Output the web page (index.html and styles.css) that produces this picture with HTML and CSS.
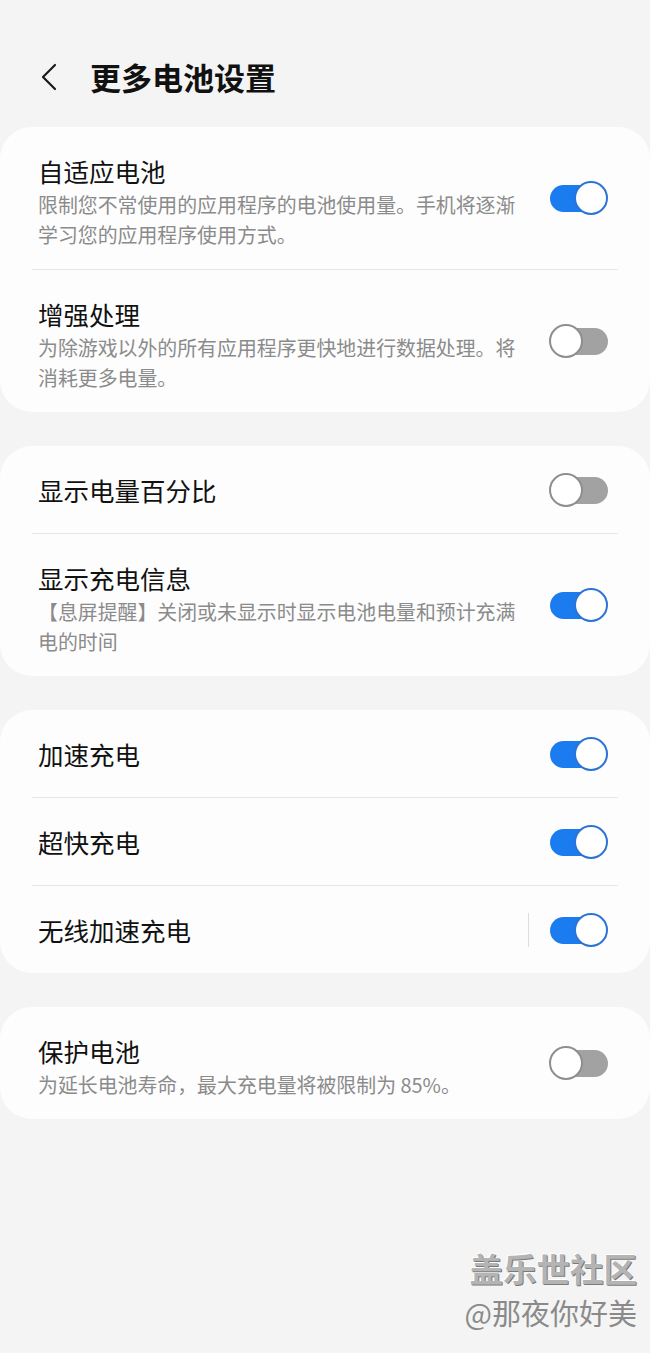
FILE: index.html
```html
<!DOCTYPE html>
<html>
  <head>
    <meta charset="utf-8">
    <title>更多电池设置</title>
    <link rel="stylesheet" href="styles.css">
  </head>
  <body>
    <div class="header">
      <svg class="back" width="16" height="28" viewBox="0 0 16 28">
        <path d="M14 2 L2 14 L14 26" fill="none" stroke="#1a1a1a" stroke-width="2.2" stroke-linecap="round" stroke-linejoin="round"/>
      </svg>
      <h1>更多电池设置</h1>
    </div>

    <div class="card">
      <div class="row multi">
        <div class="text">
          <div class="title">自适应电池</div>
          <div class="desc">限制您不常使用的应用程序的电池使用量。手机将逐渐学习您的应用程序使用方式。</div>
        </div>
        <span class="toggle on"></span>
      </div>
      <div class="divider"></div>
      <div class="row multi">
        <div class="text">
          <div class="title">增强处理</div>
          <div class="desc">为除游戏以外的所有应用程序更快地进行数据处理。将消耗更多电量。</div>
        </div>
        <span class="toggle"></span>
      </div>
    </div>

    <div class="card">
      <div class="row">
        <div class="text">
          <div class="title">显示电量百分比</div>
        </div>
        <span class="toggle"></span>
      </div>
      <div class="divider"></div>
      <div class="row multi">
        <div class="text">
          <div class="title">显示充电信息</div>
          <div class="desc">【息屏提醒】关闭或未显示时显示电池电量和预计充满电的时间</div>
        </div>
        <span class="toggle on"></span>
      </div>
    </div>

    <div class="card">
      <div class="row">
        <div class="text">
          <div class="title">加速充电</div>
        </div>
        <span class="toggle on"></span>
      </div>
      <div class="divider"></div>
      <div class="row">
        <div class="text">
          <div class="title">超快充电</div>
        </div>
        <span class="toggle on"></span>
      </div>
      <div class="divider"></div>
      <div class="row">
        <div class="text">
          <div class="title">无线加速充电</div>
        </div>
        <span class="vline"></span>
        <span class="toggle on"></span>
      </div>
    </div>

    <div class="card">
      <div class="row multi">
        <div class="text">
          <div class="title">保护电池</div>
          <div class="desc">为延长电池寿命，最大充电量将被限制为 85%。</div>
        </div>
        <span class="toggle"></span>
      </div>
    </div>

    <div class="watermark">
      <div class="wm-title">盖乐世社区</div>
      <div class="wm-user">@那夜你好美</div>
    </div>
  </body>
</html>
```

FILE: styles.css
```css
body {
  margin: 0;
  padding: 0;
  background: #f4f4f4;
  font-family: "Noto Sans CJK SC", "Noto Sans", sans-serif;
  color: #111;
}

.header {
  display: flex;
  align-items: center;
  height: 34px;
  padding: 60px 0 0 41px;
  margin-bottom: 33px;
}
.back {
  display: block;
}
.header h1 {
  margin: 0 0 0 33px;
  font-size: 31px;
  font-weight: bold;
  line-height: 34px;
  color: #111;
}

.card {
  background: #fdfdfd;
  border-radius: 32px;
  margin-bottom: 34px;
}

.row {
  display: flex;
  align-items: center;
  min-height: 87px;
  padding: 0 42px 0 38px;
  box-sizing: border-box;
}
.text {
  flex: 1;
  min-width: 0;
}
.row.multi .text {
  padding: 28px 0 19px;
}
.title {
  font-size: 25.5px;
  line-height: 32px;
}
.desc {
  width: 490px;
  margin-top: 3px;
  font-size: 19.9px;
  line-height: 30px;
  color: #8b8b8b;
}

.divider {
  height: 1px;
  margin: 0 32px;
  background: #e6e6e6;
}

.vline {
  width: 1px;
  height: 34px;
  margin-right: 20px;
  background: #dedede;
}

/* switch */
.toggle {
  position: relative;
  flex: none;
  width: 59px;
  height: 34px;
}
.toggle::before {
  content: "";
  position: absolute;
  top: 4px;
  right: 0;
  width: 47px;
  height: 27px;
  border-radius: 14px;
  background: #a2a2a2;
}
.toggle::after {
  content: "";
  position: absolute;
  top: 0;
  left: 0;
  width: 30px;
  height: 30px;
  border: 2px solid #8e8e8e;
  border-radius: 50%;
  background: #fff;
}
.toggle.on::before {
  left: 1px;
  right: auto;
  background: #1b7cf0;
}
.toggle.on::after {
  left: auto;
  right: 0;
  border-color: #2b74d6;
}

.watermark {
  margin-top: 129px;
  padding-right: 13px;
  text-align: right;
}
.wm-title {
  font-size: 33.5px;
  font-weight: bold;
  line-height: 40px;
  color: #b4b4b4;
  text-shadow: 1px 1px 0 #7a7a7a, -1px -1px 0 #fff;
}
.wm-user {
  margin-top: 5px;
  font-size: 29px;
  line-height: 38px;
  color: #8a8a8a;
}
```
